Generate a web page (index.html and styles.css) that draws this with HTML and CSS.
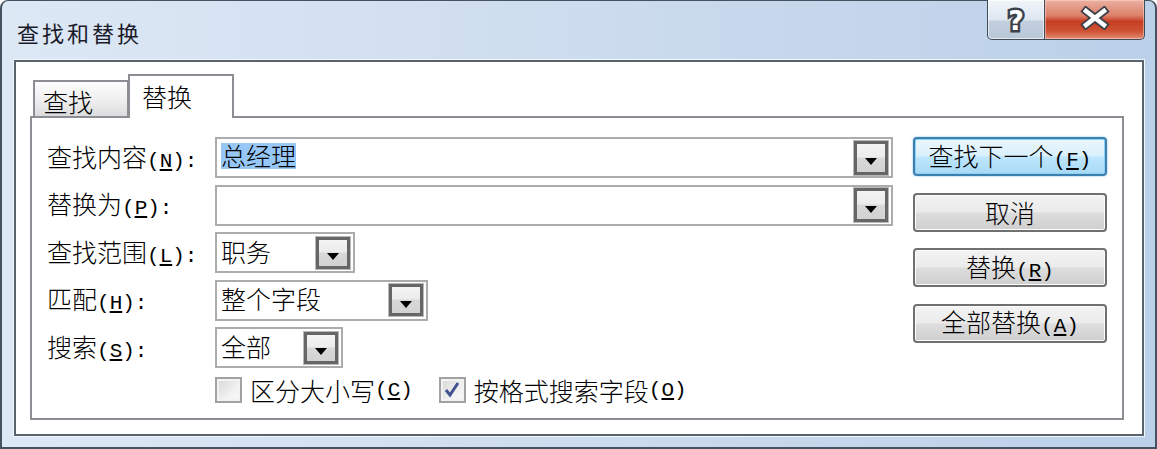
FILE: index.html
```html
<!DOCTYPE html>
<html>
	<head>
		<meta charset="utf-8">
		<title>查找和替换</title>
		<link rel="stylesheet" href="styles.css">
	</head>
	<body>
		<div class="window">
			<div class="titlebar">
				<span class="title">查找和替换</span>
				<div class="caption">
					<div class="cap help"><span>?</span></div>
					<div class="cap close">
						<svg width="30" height="24" viewBox="0 0 30 24">
							<path d="M6 5 L24 19 M24 5 L6 19" stroke="#3a3f48" stroke-width="8" stroke-linecap="square"/>
							<path d="M6 5 L24 19 M24 5 L6 19" stroke="#ffffff" stroke-width="4.5" stroke-linecap="square"/>
						</svg>
					</div>
				</div>
			</div>
			<div class="client">
				<div class="tabs">
					<div class="tab">查找</div>
					<div class="tab active">替换</div>
				</div>
				<div class="panel">
					<div class="form">
						<label class="lbl">查找内容<span class="acc">(<u>N</u>):</span></label>
						<div class="combo wide"><span class="val sel">总经理</span><span class="drop big"></span></div>

						<label class="lbl">替换为<span class="acc">(<u>P</u>):</span></label>
						<div class="combo wide"><span class="val"></span><span class="drop big"></span></div>

						<label class="lbl">查找范围<span class="acc">(<u>L</u>):</span></label>
						<div class="combo w140"><span class="val">职务</span><span class="drop"></span></div>

						<label class="lbl">匹配<span class="acc">(<u>H</u>):</span></label>
						<div class="combo w213"><span class="val">整个字段</span><span class="drop"></span></div>

						<label class="lbl">搜索<span class="acc">(<u>S</u>):</span></label>
						<div class="combo w128"><span class="val">全部</span><span class="drop"></span></div>

						<div class="checks">
							<span class="chk"><span class="box"></span>区分大小写<span class="acc">(<u>C</u>)</span></span>
							<span class="chk second">
								<span class="box">
									<svg width="20" height="20" viewBox="0 0 20 20">
										<path d="M4 10 L8 15 L16 3" fill="none" stroke="#3f5391" stroke-width="3"/>
									</svg>
								</span>按格式搜索字段<span class="acc">(<u>O</u>)</span>
							</span>
						</div>
					</div>
					<div class="actions">
						<button class="btn default">查找下一个<span class="acc">(<u>F</u>)</span></button>
						<button class="btn">取消</button>
						<button class="btn">替换<span class="acc">(<u>R</u>)</span></button>
						<button class="btn">全部替换<span class="acc">(<u>A</u>)</span></button>
					</div>
				</div>
			</div>
		</div>
	</body>
</html>
```

FILE: styles.css
```css
body {
	margin: 0;
	font-family: "Noto Sans CJK SC", "DejaVu Sans", sans-serif;
	font-weight: 300;
	color: #000;
}

.window {
	width: 1157px;
	height: 449px;
	box-sizing: border-box;
	border: 2px solid #46525f;
	border-top-width: 1px;
	border-radius: 8px 8px 0 0;
	background: linear-gradient(to right, #dde8f5, #cddcee 50%, #bbd0e9);
	display: flex;
	flex-direction: column;
}

.titlebar {
	height: 59px;
	display: flex;
	align-items: flex-start;
}

.title {
	margin: 16px 0 0 15px;
	font-size: 22px;
	font-weight: 400;
	line-height: 30px;
	letter-spacing: 3px;
	color: #1b1b2a;
}

.caption {
	margin: -1px 10px 0 auto;
	display: flex;
	height: 40px;
}

.cap {
	box-sizing: border-box;
	height: 40px;
	border: 1px solid #3f4b59;
	border-top: none;
	display: flex;
	align-items: center;
	justify-content: center;
}

.help {
	width: 58px;
	border-radius: 0 0 0 5px;
	background: linear-gradient(#f1f5fa, #dfe7f1 50%, #c3cfdd 55%, #b9c7d8);
	box-shadow: inset 0 0 0 1px rgba(255, 255, 255, 0.6);
}

.help span {
	font-family: "DejaVu Sans", sans-serif;
	font-weight: bold;
	font-size: 27px;
	color: #fff;
	-webkit-text-stroke: 5px #3c424c;
	paint-order: stroke fill;
	margin-top: 2px;
}

.close {
	width: 100px;
	border-left: none;
	border-radius: 0 0 5px 0;
	background: linear-gradient(#eab0a2, #dd8069 40%, #c53e22 55%, #cf5234 80%, #e28d72);
	box-shadow: inset 0 0 0 1px rgba(255, 220, 210, 0.5);
}

.close svg {
	margin-top: -4px;
}

.client {
	flex: 1;
	margin: 0 11px 11px 12px;
	border: 2px solid #59636e;
	background: #fff;
	box-shadow: 0 0 0 1px #f2f7fc;
	padding: 12px 18px 14px 14px;
	display: flex;
	flex-direction: column;
}

.tabs {
	display: flex;
	align-items: flex-end;
	padding-left: 3px;
	height: 44px;
	margin-bottom: -2px;
	position: relative;
	z-index: 1;
}

.tab {
	box-sizing: border-box;
	border: 2px solid #8d8e93;
	border-bottom: none;
	font-size: 25px;
	line-height: 1;
	display: flex;
	align-items: center;
}

.tab:first-child {
	width: 96px;
	height: 36px;
	margin-bottom: 2px;
	padding: 4px 0 0 8px;
	background: linear-gradient(#fdfdfd, #f0f0f0 50%, #dcdcdc);
}

.tab.active {
	width: 106px;
	height: 44px;
	margin-left: -1px;
	padding: 0 0 2px 12px;
	background: #fff;
}

.panel {
	flex: 1;
	border: 2px solid #8d8e93;
	display: flex;
	gap: 20px;
	padding: 19px 15px 0 15px;
}

.form {
	flex: 1;
	display: grid;
	grid-template-columns: 168px auto;
	grid-auto-rows: 41px;
	row-gap: 6.5px;
	align-content: start;
	justify-items: start;
}

.lbl {
	align-self: center;
	font-size: 25px;
	line-height: 1;
	white-space: nowrap;
}

.acc {
	font-family: "Liberation Mono", monospace;
	font-weight: 400;
	font-size: 21px;
}

.combo {
	box-sizing: border-box;
	height: 41px;
	border: 2px solid #acacac;
	background: #fff;
	display: flex;
	align-items: center;
	padding-left: 4px;
}

.wide {
	justify-self: stretch;
}

.w140 {
	width: 140px;
}

.w213 {
	width: 213px;
}

.w128 {
	width: 128px;
}

.val {
	flex: 1;
	font-size: 25px;
	line-height: 1;
	margin-top: -3px;
}

.sel {
	flex: none;
	background: #96c7f7;
	padding: 0 0 1px;
}

.drop {
	box-sizing: border-box;
	width: 34px;
	height: 32px;
	margin-right: 3px;
	margin-left: auto;
	border: 3px solid #666;
	box-shadow: 0 0 0 1px #b9b9b9;
	background: linear-gradient(#f4f4f4, #ececec 45%, #d8d8d8 52%, #d2d2d2);
	display: flex;
	justify-content: center;
	align-items: center;
}

.drop.big {
	height: 34px;
}

.drop::after {
	content: "";
	border-left: 6px solid transparent;
	border-right: 6px solid transparent;
	border-top: 7px solid #000;
	margin-top: 8px;
}

.checks {
	grid-column: 2;
	align-self: start;
	display: flex;
	align-items: center;
	padding-top: 2.5px;
	font-size: 25px;
	line-height: 1;
	white-space: nowrap;
}

.chk {
	display: flex;
	align-items: center;
}

.chk.second {
	margin-left: 26px;
}

.box {
	box-sizing: border-box;
	width: 27px;
	height: 26px;
	margin-right: 8px;
	border: 2px solid #a2a2a2;
	background: linear-gradient(135deg, #d6d6d6, #f0f0f0 60%, #fbfbfb);
	box-shadow: inset 0 0 0 2px #f2f2f2;
	display: flex;
	align-items: center;
	justify-content: center;
}

.actions {
	width: 194px;
	display: flex;
	flex-direction: column;
	gap: 16.5px;
}

.btn {
	height: 39px;
	padding: 0;
	border: 2px solid #707070;
	border-radius: 4px;
	background: linear-gradient(#f3f3f3, #ebebeb 48%, #dddddd 52%, #cfcfcf);
	box-shadow: inset 0 0 0 1px #fbfbfb;
	font-family: "Noto Sans CJK SC", sans-serif;
	font-weight: 300;
	font-size: 25px;
	line-height: 1;
	color: #000;
}

.btn.default {
	border-color: #3c7fb1;
	background: linear-gradient(#eaf6fd, #d9f0fc 48%, #bee6fd 52%, #a7d9f5);
	box-shadow: inset 0 0 0 1px #8fd0f2, 0 0 2px #5fb4e8;
}
```
